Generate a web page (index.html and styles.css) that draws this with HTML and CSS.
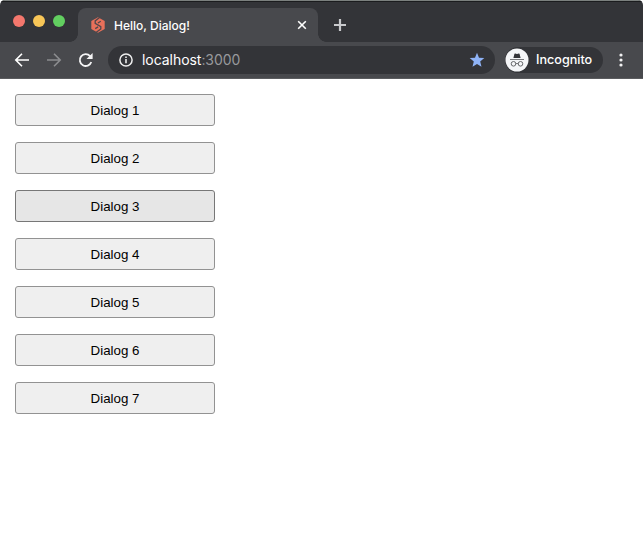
FILE: index.html
```html
<!DOCTYPE html>
<html lang="en">
<head>
<meta charset="utf-8">
<title>Hello, Dialog!</title>
<link rel="stylesheet" href="styles.css">
</head>
<body>
<div class="window">
  <header class="tabstrip">
    <div class="lights"><i class="light red"></i><i class="light yellow"></i><i class="light green"></i></div>
    <div class="tab">
      <svg class="favicon" width="14" height="16" viewBox="0 0 14 16"><path d="M7 .3l6.7 3.8v7.8L7 15.7.3 11.9V4.1z" fill="#e8705a"/><path d="M8.6.6 4.2 3.9v2.4l5.6 3.3v2.4L5.3 15.3M9.8 4.3 6.9 6M4.2 11.6l2.9-1.7" fill="none" stroke="#51484b" stroke-width="1.3"/></svg>
      <span class="title">Hello, Dialog!</span>
      <svg class="close" width="10" height="10" viewBox="0 0 10 10"><path d="M1.2 1.2l7.6 7.6M8.8 1.2L1.2 8.8" stroke="#fff" stroke-width="1.6"/></svg>
    </div>
    <svg class="plus" width="12" height="12" viewBox="0 0 12 12"><path d="M6 0v12M0 6h12" stroke="#c9cacd" stroke-width="2.2"/></svg>
  </header>
  <nav class="toolbar">
    <svg class="nav-icon" width="16" height="16" viewBox="0 0 16 16"><path d="M15 8H2M8 1.8 1.8 8 8 14.2" fill="none" stroke="#fff" stroke-width="1.6"/></svg>
    <svg class="nav-icon" width="16" height="16" viewBox="0 0 16 16"><path d="M1 8h13M8 1.8 14.2 8 8 14.2" fill="none" stroke="#8b8c8f" stroke-width="1.6"/></svg>
    <svg class="nav-icon" width="16" height="16" viewBox="0 0 16 16"><path d="M13.3 10A5.9 5.9 0 1 1 12.1 4.1L13.5 5.5" fill="none" stroke="#f4f4f5" stroke-width="1.8"/><path d="M14.6 1v6.1H8.5z" fill="#f4f4f5"/></svg>
    <div class="address">
      <svg width="14" height="14" viewBox="0 0 14 14"><circle cx="7" cy="7" r="6.1" fill="none" stroke="#eee" stroke-width="1.5"/><path d="M7 6v4.3M7 3.4v1.5" stroke="#eee" stroke-width="1.6"/></svg>
      <span class="url">localhost<span class="port">:3000</span></span>
      <svg class="star" width="16" height="16" viewBox="0 0 16 16"><path d="M8 .8l2 4.9 5.3.4-4.1 3.4 1.3 5.3L8 12l-4.5 2.8 1.3-5.3L.7 6.1 6 5.7z" fill="#8fb3f7"/></svg>
    </div>
    <div class="profile">
      <svg width="24" height="24" viewBox="0 0 24 24"><circle cx="12" cy="12" r="11.5" fill="#f4f5f7"/><path d="M8.4 10l1-4.1q.2-.5.8-.3l1.8.4 1.8-.4q.6-.2.8.3l1 4.1z" fill="#333438"/><path d="M5 11.5h14M10.6 15.8q1.4-.8 2.8 0" fill="none" stroke="#77787b"/><circle cx="8.5" cy="15.8" r="2.3" fill="none" stroke="#66676a"/><circle cx="15.5" cy="15.8" r="2.3" fill="none" stroke="#66676a"/></svg>
      <span>Incognito</span>
    </div>
    <svg class="menu" width="4" height="14" viewBox="0 0 4 14"><g fill="#f1f1f2"><circle cx="2" cy="2" r="1.6"/><circle cx="2" cy="7" r="1.6"/><circle cx="2" cy="12" r="1.6"/></g></svg>
  </nav>
  <main class="page">
    <button>Dialog 1</button>
    <button>Dialog 2</button>
    <button class="active">Dialog 3</button>
    <button>Dialog 4</button>
    <button>Dialog 5</button>
    <button>Dialog 6</button>
    <button>Dialog 7</button>
  </main>
</div>
</body>
</html>
```
FILE: styles.css
```css
* { box-sizing: border-box; }
body { margin: 0; background: #fff; font-family: Inter, Roboto, "Liberation Sans", sans-serif; }
svg { display: block; flex: none; }
.window { height: 556px; overflow: hidden; border-radius: 5px 5px 0 0; }
.tabstrip { height: 42px; display: flex; background: #333438; border-top: 1px solid #7b807e; box-shadow: inset 0 1px #1b1c1e; }
.lights { width: 78px; padding: 14px 0 0 13px; display: flex; gap: 8px; }
.light { width: 12px; height: 12px; border-radius: 50%; }
.red { background: #f4776d; }
.yellow { background: #f8c657; }
.green { background: #62cf60; }
.tab { position: relative; width: 240px; height: 34px; margin-top: 7px; padding: 0 11px 0 13px; display: flex; align-items: center; background: #48494d; border-radius: 8px 8px 0 0; }
.tab::before, .tab::after { content: ""; position: absolute; bottom: 0; width: 8px; height: 8px; }
.tab::before { left: -8px; background: radial-gradient(circle at 0 0, #333438 7.5px, #48494d 8px); }
.tab::after { right: -8px; background: radial-gradient(circle at 100% 0, #333438 7.5px, #48494d 8px); }
.title { flex: 1; margin-left: 9px; font-size: 12px; font-weight: 500; color: #fff; white-space: nowrap; }
.plus { margin: 18px 0 0 16px; }
.toolbar { height: 37px; padding: 0 20px 1px 14px; display: flex; align-items: center; background: #48494d; border-bottom: 1px solid #5b5c5f; }
.nav-icon { margin-right: 16px; }
.address { width: 387px; height: 28px; margin-left: -2px; padding: 0 10px 0 11px; display: flex; align-items: center; border-radius: 14px; background: #333438; }
.url { flex: 1; margin-left: 9px; font-size: 14px; letter-spacing: -.05px; color: #fff; white-space: nowrap; }
.port { color: #98999c; }
.profile { width: 98px; height: 26px; margin-left: 10px; display: flex; align-items: center; border-radius: 13px; background: #333438; color: #fff; font-size: 12.6px; font-weight: 500; }
.profile span { margin-left: 7px; }
.menu { margin-left: auto; }
.page { padding: 15px; display: flex; flex-direction: column; gap: 16px; }
.page button { width: 200px; height: 32px; padding: 0; border: 1px solid #929292; border-radius: 3px; background: #efefef; color: #000; font: 13.333px "Liberation Sans", Arial, sans-serif; }
.page .active { background: #e6e6e6; border-color: #777; }
```
